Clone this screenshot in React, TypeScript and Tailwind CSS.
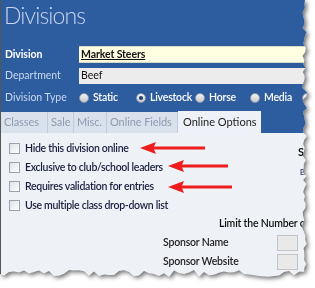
import React from 'react';

// jagged "torn paper" outline, computed once at run time
const tornEdge = () => {
  const pts: string[] = ['0px 0px', '305px 0px'];
  let seed = 7;
  const rnd = () => {
    seed = (seed * 9301 + 49297) % 233280;
    return seed / 233280;
  };
  for (let y = 4; y < 274; y += 4) pts.push(`${(302 + rnd() * 5).toFixed(1)}px ${y}px`);
  for (let x = 304; x > 0; x -= 5) pts.push(`${x}px ${(270 + rnd() * 7).toFixed(1)}px`);
  pts.push('0px 274px');
  return `polygon(${pts.join(',')})`;
};

const Radio = ({ label, checked, w }: { label?: string; checked?: boolean; w: string }) => (
  <div className={`flex items-center gap-[4px] shrink-0 ${w}`}>
    <span className="w-[10px] h-[10px] rounded-full bg-gradient-to-b from-[#f4f4f4] to-[#c9c9c9] border border-[#8c9bb0] flex items-center justify-center">
      {checked && <span className="w-[4px] h-[4px] rounded-full bg-[#1d3f73]" />}
    </span>
    {label && <span className="text-white text-[10.5px] font-semibold tracking-[-0.2px]">{label}</span>}
  </div>
);

const Check = ({ label }: { label: string }) => (
  <div className="flex items-center gap-[5px] h-[19px]">
    <span className="w-[11px] h-[11px] border border-[#9aa3ad] bg-gradient-to-br from-[#dfe2e6] to-[#ffffff]" />
    <span className="text-[10.5px] font-semibold text-[#1a1f3d] tracking-[-0.3px]">{label}</span>
  </div>
);

const Arrow = ({ x, y, len }: { x: number; y: number; len: number }) => (
  <polygon
    fill="#ee1c1c"
    points={`${x},${y} ${x + 16},${y - 6} ${x + 14},${y - 1.5} ${x + len},${y - 1.5} ${x + len},${y + 1.5} ${x + 14},${y + 1.5} ${x + 16},${y + 6}`}
  />
);

export default function App() {
  const tabs = [
    { t: 'Classes', w: 'w-[47px]' },
    { t: 'Sale', w: 'w-[26px]' },
    { t: 'Misc.', w: 'w-[33px]' },
    { t: 'Online Fields', w: 'w-[71px]' },
  ];
  return (
    <div className="w-[315px] h-[288px] bg-white overflow-hidden relative font-['Lato','Open_Sans',sans-serif]">
      <div className="drop-shadow-[2px_2px_2px_rgba(0,0,0,0.55)]">
        <div className="w-[310px] h-[280px] bg-[#eef1f6] flex flex-col border-l border-[#555]" style={{ clipPath: tornEdge() }}>
          <div className="bg-[#2e5d9f] h-[133px] flex flex-col">
            <div className="pl-[3px] h-[44px] text-[23px] font-light text-[#c5d6ee] leading-[30px] tracking-[-0.9px]">Divisions</div>
            <div className="flex items-center h-[21px] pl-[4px]">
              <span className="w-[74px] text-white text-[10.5px] font-bold tracking-[-0.1px]">Division</span>
              <div className="flex-1 h-[17px] bg-[#ffffe1] border-y border-[#d8d8c8] pl-[2px] flex items-center">
                <span className="text-[10.5px] font-bold text-[#111] underline tracking-[-0.1px]">Market Steers</span>
              </div>
            </div>
            <div className="flex items-center h-[21px] pl-[4px]">
              <span className="w-[74px] text-[#c8d8f0] text-[10.5px]">Department</span>
              <div className="flex-1 h-[16px] bg-[#ececec] pl-[2px] flex items-center">
                <span className="text-[10.5px] text-[#111]">Beef</span>
              </div>
            </div>
            <div className="flex items-center h-[24px] pl-[4px] whitespace-nowrap">
              <span className="w-[74px] shrink-0 text-[#c8d8f0] text-[10.5px]">Division Type</span>
              <div className="flex items-center">
                <Radio label="Static" w="w-[57px]" />
                <Radio label="Livestock" checked w="w-[59px]" />
                <Radio label="Horse" w="w-[55px]" />
                <Radio label="Media" w="w-[52px]" />
                <Radio w="w-[12px]" />
              </div>
            </div>
            <div className="mt-auto flex h-[21px] items-end whitespace-nowrap">
              {tabs.map(({ t, w }) => (
                <div key={t} className={`h-[21px] ${w} pl-[3px] bg-[#d9e1ec] border-r border-[#bfcadb] flex items-center text-[11px] text-[#8d9bb0] tracking-[-0.1px]`}>
                  {t}
                </div>
              ))}
              <div className="h-[22px] w-[83px] pl-[5px] bg-[#eef2f8] flex items-center text-[11px] text-[#222]">Online Options</div>
            </div>
          </div>
          <div className="flex-1 flex pt-[6px] pl-[8px]">
            <div className="w-[289px] flex flex-col whitespace-nowrap">
              <Check label="Hide this division online" />
              <Check label="Exclusive to club/school leaders" />
              <Check label="Requires validation for entries" />
              <Check label="Use multiple class drop-down list" />
              <div className="pl-[210px] pt-[1px] text-[10.5px] font-semibold text-[#111] tracking-[-0.2px]">Limit the Number of</div>
              <div className="flex items-center h-[19px] mt-[2px] pl-[154px]">
                <span className="w-[122px] text-[10.5px] font-semibold text-[#222] tracking-[-0.2px]">Sponsor Name</span>
                <span className="w-[22px] h-[16px] bg-[#e9e9e9] border border-[#c4c4c4]" />
              </div>
              <div className="flex items-center h-[19px] pl-[154px]">
                <span className="w-[122px] text-[10.5px] font-semibold text-[#222] tracking-[-0.2px]">Sponsor Website</span>
                <span className="w-[22px] h-[16px] bg-[#e9e9e9] border border-[#c4c4c4]" />
              </div>
            </div>
            <div className="flex flex-col pt-[5px] whitespace-nowrap">
              <span className="text-[11px] font-bold text-[#111]">Sp</span>
              <span className="text-[7px] font-semibold text-[#3a2a6a] mt-[6px] pl-[2px]">Eo</span>
            </div>
          </div>
        </div>
      </div>
      <svg className="absolute left-0 top-0" width="315" height="288">
        <Arrow x={140} y={148} len={65} />
        <Arrow x={168} y={166} len={60} />
        <Arrow x={168} y={187} len={64} />
      </svg>
    </div>
  );
}
